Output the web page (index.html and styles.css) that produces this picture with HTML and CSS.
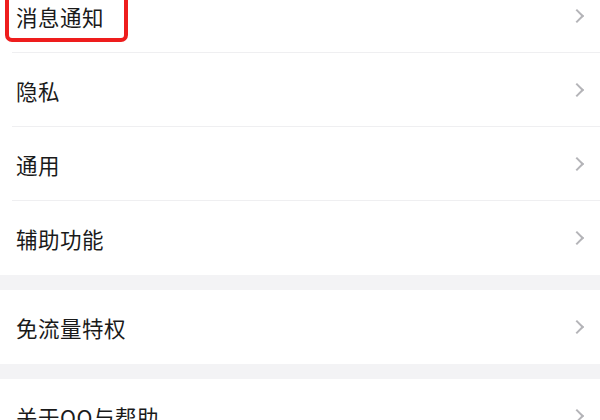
FILE: index.html
```html
<!DOCTYPE html>
<html lang="zh-CN">
<head>
    <meta charset="UTF-8">
    <meta name="viewport" content="width=device-width, initial-scale=1.0">
    <title>设置</title>
    <link rel="stylesheet" href="styles.css">
</head>
<body>
    <div class="settings">
        <div class="group">
            <div class="row highlighted">
                <span class="label">消息通知</span>
                <span class="chevron"></span>
                <div class="mark"></div>
            </div>
            <div class="row">
                <span class="label">隐私</span>
                <span class="chevron"></span>
            </div>
            <div class="row">
                <span class="label">通用</span>
                <span class="chevron"></span>
            </div>
            <div class="row">
                <span class="label">辅助功能</span>
                <span class="chevron"></span>
            </div>
        </div>
        <div class="group">
            <div class="row">
                <span class="label">免流量特权</span>
                <span class="chevron"></span>
            </div>
        </div>
        <div class="group">
            <div class="row">
                <span class="label">关于QQ与帮助</span>
                <span class="chevron"></span>
            </div>
        </div>
    </div>
</body>
</html>
```

FILE: styles.css
```css
body {
    margin: 0;
    background-color: #f3f3f5;
    font-family: "Noto Sans CJK SC", "Noto Sans", sans-serif;
    overflow: hidden;
}

.settings {
    margin-top: -21px; /* list is scrolled slightly */
}

.group {
    background-color: #fff;
    margin-bottom: 15px;
}

.row {
    position: relative;
    display: flex;
    align-items: center;
    justify-content: space-between;
    height: 74px;
    padding: 0 16px 0 16px;
}

.row + .row::before {
    content: "";
    position: absolute;
    top: -1px;
    left: 12px;
    right: 0;
    height: 1px;
    background-color: #efeff1;
}

.label {
    font-size: 21.5px;
    color: #1a1a1a;
    letter-spacing: 0.5px;
}

.chevron {
    width: 8px;
    height: 8px;
    border-top: 2px solid #b4b4b8;
    border-right: 2px solid #b4b4b8;
    transform: rotate(45deg);
    margin-right: 2px;
}

.mark {
    position: absolute;
    left: 5px;
    top: 6px;
    width: 115px;
    height: 49px;
    border: 4px solid #ee1d1d;
    border-radius: 7px;
}
```
